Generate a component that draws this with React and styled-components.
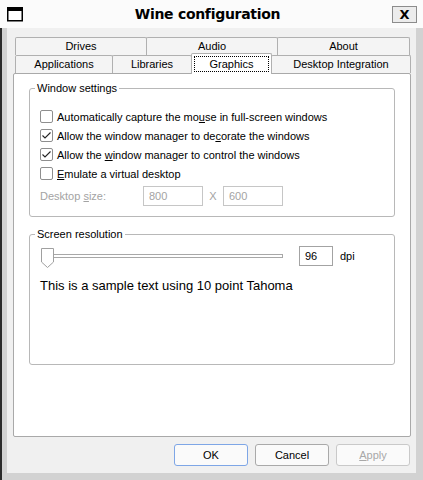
import React from 'react';
import styled, { createGlobalStyle, css } from 'styled-components';

const GlobalStyle = createGlobalStyle`
    html, body {
        margin: 0;
        padding: 0;
        background: #1e1e1e;
    }
    body {
        font-family: "Liberation Sans", Arial, sans-serif;
        font-size: 11px;
        color: #000;
    }
`;

const Window = styled.div`
    width: 423px;
    height: 480px;
    display: flex;
    flex-direction: column;
    background: #d2d2d2;
`;

const TitleBar = styled.div`
    height: 28px;
    flex-shrink: 0;
    display: flex;
    align-items: center;
    background: #fbfbfb;
    padding: 0 7px;
    box-sizing: border-box;
`;

const TitleText = styled.div`
    flex: 1;
    text-align: center;
    font-family: "DejaVu Sans", sans-serif;
    font-weight: bold;
    font-size: 14px;
    line-height: 28px;
    letter-spacing: -0.3px;
`;

const CloseButton = styled.div`
    width: 25px;
    height: 17px;
    box-sizing: border-box;
    border: 1px solid #8c8c8c;
    background: #ececec;
    display: flex;
    align-items: center;
    justify-content: center;
    font-family: "DejaVu Sans", sans-serif;
    font-weight: bold;
    font-size: 13px;
    margin-right: -1px;
`;

const Frame = styled.div`
    flex: 1;
    display: flex;
    border-left: 2px solid #2b2b2b;
    padding: 0 7px 7px 5px;
`;

const Body = styled.div`
    flex: 1;
    display: flex;
    flex-direction: column;
    background: #f0f0f0;
    padding-top: 9px;
`;

const TabStrip = styled.div`
    margin-left: 8px;
    display: flex;
    flex-direction: column;
`;

const TabRow = styled.div`
    display: flex;
    height: 18px;
    align-items: flex-start;
`;

const Tab = styled.div`
    width: ${p => p.$w}px;
    height: 18px;
    box-sizing: border-box;
    border: 1px solid #b0b0b0;
    border-bottom: none;
    border-radius: 2px 2px 0 0;
    background: #f4f4f4;
    display: flex;
    align-items: center;
    justify-content: center;
    padding-bottom: 1px;
    & + & {
        margin-left: -1px;
    }
    ${p => p.$active && css`
        position: relative;
        z-index: 1;
        height: 21px;
        margin-top: -2px;
        background: #fff;
        padding: 2px 2px 2px 2px;
        align-items: stretch;
    `}
`;

const FocusBox = styled.div`
    flex: 1;
    border: 1px dotted #000;
    display: flex;
    align-items: center;
    justify-content: center;
    padding-bottom: 1px;
`;

const Panel = styled.div`
    margin-left: 6px;
    width: 398px;
    height: 364px;
    box-sizing: border-box;
    background: #fff;
    border: 1px solid #a9a9a9;
    border-radius: 2px;
    padding: 7px 0 0 15px;
    display: flex;
    flex-direction: column;
`;

const Group = styled.fieldset`
    margin: 0;
    width: 366px;
    box-sizing: border-box;
    border: 1px solid #b8b8b8;
    border-radius: 3px;
    padding: ${p => p.$pad};
    height: ${p => p.$h}px;
    display: flex;
    flex-direction: column;
    & + & {
        margin-top: 10px;
    }
`;

const Legend = styled.legend`
    font-size: 11px;
    line-height: 15px;
    padding: 0 2px;
    margin-left: -5px;
`;

const CheckRow = styled.label`
    display: flex;
    align-items: center;
    gap: 4px;
    height: 19px;
`;

const Box = styled.span`
    width: 13px;
    height: 13px;
    box-sizing: border-box;
    border: 1px solid #8e8e8e;
    border-radius: 2px;
    background: #fff;
    display: flex;
    align-items: center;
    justify-content: center;
`;

const Key = styled.span`
    text-decoration: underline;
    text-underline-offset: 1px;
`;

const SizeRow = styled.div`
    display: flex;
    align-items: center;
    height: 20px;
    margin-top: 3px;
    color: #a3a3a3;
`;

const SizeLabel = styled.span`
    width: 103px;
`;

const Field = styled.div`
    width: ${p => p.$w}px;
    height: 20px;
    box-sizing: border-box;
    border: 1px solid ${p => (p.$disabled ? '#c6c6c6' : '#a3a3a3')};
    color: ${p => (p.$disabled ? '#a3a3a3' : '#000')};
    background: #fff;
    display: flex;
    align-items: center;
    padding-left: 5px;
`;

const Times = styled.span`
    width: 20px;
    text-align: center;
`;

const SliderRow = styled.div`
    display: flex;
    align-items: flex-start;
    height: 22px;
`;

const Slider = styled.div`
    position: relative;
    margin-left: 1px;
    width: 242px;
    height: 22px;
`;

const Groove = styled.div`
    position: absolute;
    left: 3px;
    right: 0;
    top: 8px;
    height: 4px;
    box-sizing: border-box;
    border: 1px solid #a8a8a8;
    background: #fff;
`;

const Thumb = styled.svg`
    position: absolute;
    left: 0;
    top: 2px;
`;

const DpiField = styled(Field)`
    margin-left: 16px;
`;

const Unit = styled.span`
    margin-left: 7px;
    line-height: 20px;
`;

const Sample = styled.div`
    font-size: 13px;
    line-height: 16px;
    margin-top: 10px;
`;

const Footer = styled.div`
    display: flex;
    justify-content: flex-end;
    gap: 7px;
    padding: 7px 6px 0 0;
`;

const Button = styled.div`
    width: 74px;
    height: 22px;
    box-sizing: border-box;
    border: 1px solid ${p => (p.$default ? '#7ea6e6' : p.$disabled ? '#c9c9c9' : '#a9a9a9')};
    border-radius: 3px;
    background: #fafafa;
    color: ${p => (p.$disabled ? '#a8a8a8' : '#000')};
    display: flex;
    align-items: center;
    justify-content: center;
    font-size: 11px;
`;

const Check = ({ on }) => (
    <Box>
        {on && (
            <svg width="11" height="11" viewBox="0 0 11 11">
                <polyline points="1.5,5.5 4,8 9.5,2.5" fill="none" stroke="#222" strokeWidth="1.1" />
            </svg>
        )}
    </Box>
);

const WindowIcon = () => (
    <svg width="16" height="15" viewBox="0 0 16 15">
        <rect x="0.75" y="0.75" width="14.5" height="13" fill="#fff" stroke="#000" strokeWidth="1.5" />
        <rect x="0" y="0" width="16" height="4" fill="#000" />
    </svg>
);

const App = () => {
    return (
        <>
            <GlobalStyle />
            <Window>
                <TitleBar>
                    <WindowIcon />
                    <TitleText>Wine configuration</TitleText>
                    <CloseButton>X</CloseButton>
                </TitleBar>
                <Frame>
                    <Body>
                        <TabStrip>
                            <TabRow>
                                <Tab $w={132}>Drives</Tab>
                                <Tab $w={132}>Audio</Tab>
                                <Tab $w={133}>About</Tab>
                            </TabRow>
                            <TabRow>
                                <Tab $w={98}>Applications</Tab>
                                <Tab $w={80}>Libraries</Tab>
                                <Tab $w={81} $active>
                                    <FocusBox>Graphics</FocusBox>
                                </Tab>
                                <Tab $w={140}>Desktop Integration</Tab>
                            </TabRow>
                        </TabStrip>
                        <Panel>
                            <Group $pad="11px 10px 10px 10px">
                                <Legend>Window settings</Legend>
                                <CheckRow>
                                    <Check />
                                    <span>Automatically capture the mo<Key>u</Key>se in full-screen windows</span>
                                </CheckRow>
                                <CheckRow>
                                    <Check on />
                                    <span>Allow the window manager to de<Key>c</Key>orate the windows</span>
                                </CheckRow>
                                <CheckRow>
                                    <Check on />
                                    <span>Allow the <Key>w</Key>indow manager to control the windows</span>
                                </CheckRow>
                                <CheckRow>
                                    <Check />
                                    <span><Key>E</Key>mulate a virtual desktop</span>
                                </CheckRow>
                                <SizeRow>
                                    <SizeLabel>Desktop <Key>s</Key>ize:</SizeLabel>
                                    <Field $w={60} $disabled>800</Field>
                                    <Times>X</Times>
                                    <Field $w={60} $disabled>600</Field>
                                </SizeRow>
                            </Group>
                            <Group $pad="4px 10px 0 10px" $h={138}>
                                <Legend>Screen resolution</Legend>
                                <SliderRow>
                                    <Slider>
                                        <Groove />
                                        <Thumb width="13" height="20" viewBox="0 0 13 20">
                                            <path d="M0.5,0.5 H12.5 V14 L6.5,19.5 L0.5,14 Z" fill="#fff" stroke="#a0a0a0" />
                                        </Thumb>
                                    </Slider>
                                    <DpiField $w={34}>96</DpiField>
                                    <Unit>dpi</Unit>
                                </SliderRow>
                                <Sample>This is a sample text using 10 point Tahoma</Sample>
                            </Group>
                        </Panel>
                        <Footer>
                            <Button $default>OK</Button>
                            <Button>Cancel</Button>
                            <Button $disabled><Key>A</Key>pply</Button>
                        </Footer>
                    </Body>
                </Frame>
            </Window>
        </>
    );
};

export default App;
